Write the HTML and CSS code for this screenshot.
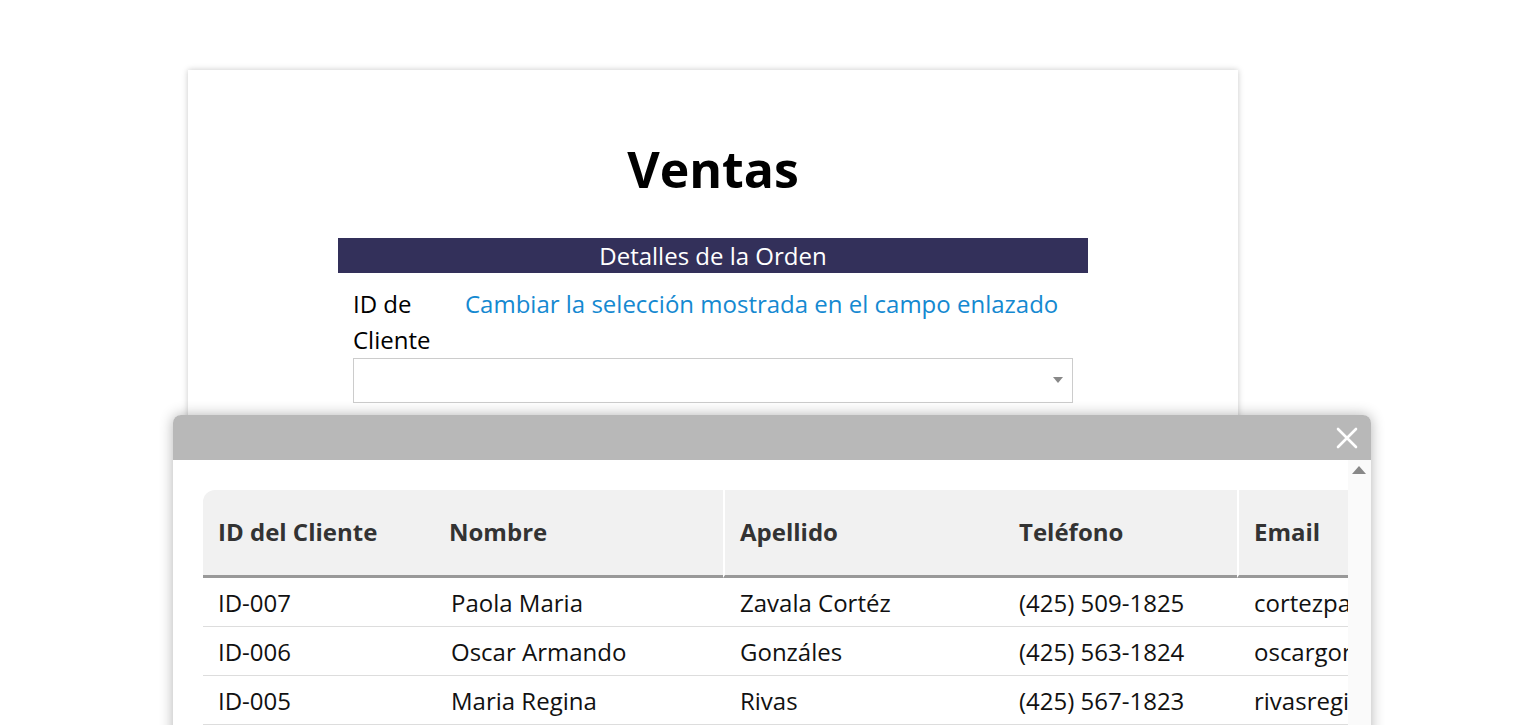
FILE: index.html
```html
<!DOCTYPE html>
<html lang="es">
<head>
	<meta charset="UTF-8">
	<title>Ventas</title>
	<link rel="stylesheet" href="styles.css">
</head>
<body>

<div class="page">
	<div class="card">
		<h1 class="title">Ventas</h1>
		<div class="section">
			<div class="section-head">Detalles de la Orden</div>
			<div class="field">
				<div class="field-row">
					<label class="field-label">ID de Cliente</label>
					<a class="field-link" href="#">Cambiar la selección mostrada en el campo enlazado</a>
				</div>
				<div class="select">
					<span class="select-arrow"></span>
				</div>
			</div>
		</div>
	</div>
</div>

<div class="modal">
	<div class="modal-head">
		<svg class="modal-close" width="22" height="22" viewBox="0 0 22 22">
			<path d="M2 2 L20 20 M20 2 L2 20" stroke="#fff" stroke-width="2.6" stroke-linecap="round" fill="none"/>
		</svg>
	</div>
	<div class="modal-body">
		<div class="grid-wrap">
			<table class="grid">
				<thead>
					<tr>
						<th class="c1">ID del Cliente</th>
						<th class="c2">Nombre</th>
						<th class="c3 sep">Apellido</th>
						<th class="c4">Teléfono</th>
						<th class="c5 sep">Email</th>
					</tr>
				</thead>
				<tbody>
					<tr>
						<td>ID-007</td>
						<td class="pad">Paola Maria</td>
						<td class="pad">Zavala Cortéz</td>
						<td>(425) 509-1825</td>
						<td class="pad cut">cortezpaola@correo.com</td>
					</tr>
					<tr>
						<td>ID-006</td>
						<td class="pad">Oscar Armando</td>
						<td class="pad">Gonzáles</td>
						<td>(425) 563-1824</td>
						<td class="pad cut">oscargonzales@correo.com</td>
					</tr>
					<tr>
						<td>ID-005</td>
						<td class="pad">Maria Regina</td>
						<td class="pad">Rivas</td>
						<td>(425) 567-1823</td>
						<td class="pad cut">rivasregina@correo.com</td>
					</tr>
				</tbody>
			</table>
		</div>
		<div class="scrollbar">
			<span class="scroll-up"></span>
		</div>
	</div>
</div>

</body>
</html>
```

FILE: styles.css
```css
*{padding:0; margin:0; box-sizing:border-box;}
html,body{height:100%; overflow:hidden;}
body{background:#fff; font-family:"Open Sans", "Liberation Sans", sans-serif; color:#000;}

.page{padding-top:70px; height:100%;}
.card{width:1050px; margin-left:188px; height:100%; background:#fff; box-shadow:0 0 6px rgba(0,0,0,0.22);}

.title{font-size:50px; font-weight:700; text-align:center; line-height:64px; padding-top:67px; margin-bottom:37px;}

.section{width:750px; margin-left:150px;}
.section-head{height:35px; line-height:35px; background:#33305a; color:#fff; text-align:center; font-size:24px;}

.field{padding:13px 15px 0;}
.field-row{display:flex; font-size:24px; line-height:36px;}
.field-label{width:112px; flex:none;}
.field-link{color:#1589d1; text-decoration:none;}

.select{position:relative; width:720px; height:45px; border:1px solid #ccc; background:#fff;}
.select-arrow{position:absolute; right:9px; top:18px; width:0; height:0; border-left:5px solid transparent; border-right:5px solid transparent; border-top:6px solid #888;}

.modal{position:absolute; left:173px; top:415px; width:1198px; height:360px; background:#fff; border-radius:8px 8px 0 0; box-shadow:0 0 14px rgba(0,0,0,0.3);}
.modal-head{height:45px; background:#b8b8b8; border-radius:8px 8px 0 0; display:flex; justify-content:flex-end; align-items:center; padding-right:13px;}
.modal-close{display:block;}

.modal-body{display:flex; height:315px;}
.grid-wrap{width:1175px; padding:30px 0 0 30px; overflow:hidden; flex:none;}
.scrollbar{width:23px; background:#fafafa; position:relative;}
.scroll-up{position:absolute; left:4px; top:6px; width:0; height:0; border-left:7px solid transparent; border-right:7px solid transparent; border-bottom:8px solid #888;}

.grid{border-collapse:separate; border-spacing:0; font-size:24px; white-space:nowrap; table-layout:fixed; width:1145px;}
.grid th{height:88px; background:#f1f1f1; color:#333; font-weight:700; text-align:left; padding:0 15px 3px; border-bottom:3px solid #999;}
.grid th.c1{width:231px; border-top-left-radius:12px;}
.grid th.c2{width:289px;}
.grid th.c3{width:281px;}
.grid th.c4{width:233px;}
.grid th.sep{border-left:2px solid #fff;}
.grid td{height:49px; padding:0 15px; border-bottom:1px solid #ddd; color:#111;}
.grid td.pad{padding-left:17px;}
.grid td.cut{overflow:hidden; text-overflow:clip; padding-right:0;}
```
